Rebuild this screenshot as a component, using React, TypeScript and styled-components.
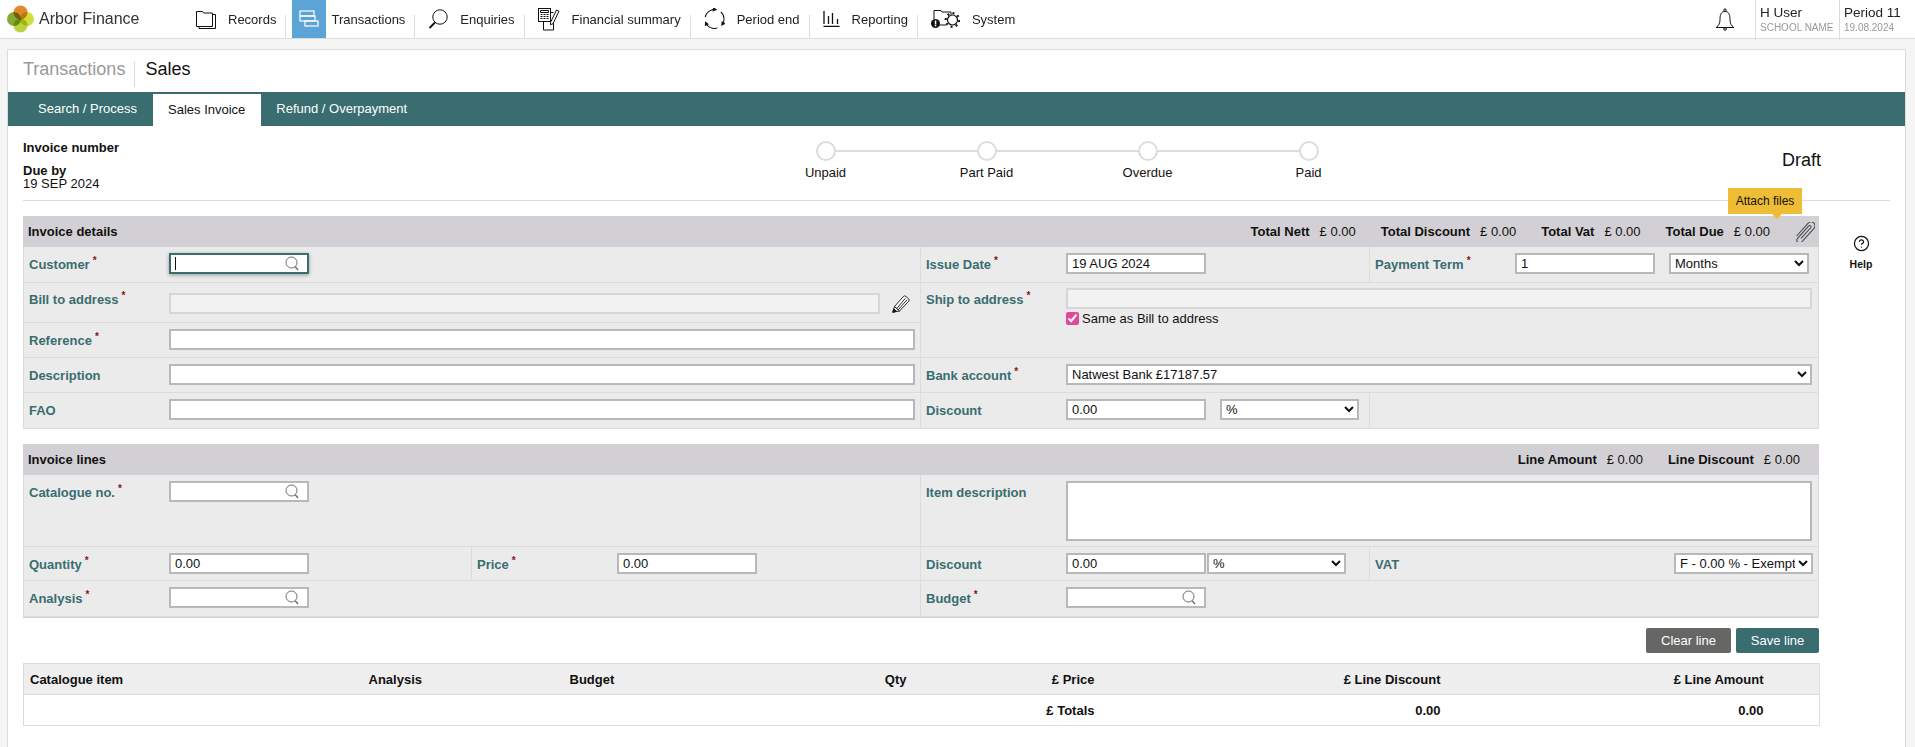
import styled, { createGlobalStyle, css } from "styled-components";
import { CircleHelp } from "lucide-react";

const GlobalStyle = createGlobalStyle`
  html, body {
    margin: 0;
    height: 100%;
    background: #f5f5f5;
    overflow: hidden;
  }
  body, input, select, textarea, button, table {
    font-family: "Liberation Sans", Arial, sans-serif;
    font-size: 13px;
    color: #111;
  }
  #root {
    height: 100%;
  }
`;

const teal = "#3a6d70";
const lineGrey = "#dcdcdc";

const Page = styled.div`
  display: flex;
  flex-direction: column;
  height: 100vh;
`;

/* top bar */

const TopBar = styled.header`
  display: flex;
  flex: none;
  align-items: stretch;
  height: 38px;
  background: #fff;
  border-bottom: 1px solid ${lineGrey};
`;

const Brand = styled.div`
  display: flex;
  flex: none;
  align-items: center;
  gap: 5px;
  width: 176px;
  padding-left: 7px;
  color: #333;
  font-size: 16px;
`;

const Nav = styled.nav`
  display: flex;
  flex: 1;
`;

const NavItem = styled.a<{ $active?: boolean }>`
  position: relative;
  display: flex;
  align-items: center;
  gap: ${(p) => (p.$active ? 5 : 12)}px;
  padding: 0 10px 0 ${(p) => (p.$active ? 6 : 13)}px;
  color: #222;
  white-space: nowrap;
  cursor: pointer;
  &:not(:last-child)::after {
    content: "";
    position: absolute;
    right: 0;
    top: 15px;
    bottom: 0;
    width: 1px;
    background: ${lineGrey};
  }
`;

const NavTile = styled.span`
  display: flex;
  align-items: center;
  justify-content: center;
  align-self: stretch;
  width: 34px;
  background: #5ba4d5;
`;

const BellBox = styled.div`
  display: flex;
  align-items: center;
  padding-right: 20px;
`;

const UserBox = styled.div<{ $w: number }>`
  position: relative;
  display: flex;
  flex-direction: column;
  width: ${(p) => p.$w}px;
  padding: 5px 0 0 4px;
  box-sizing: border-box;
  border-left: 1px solid ${lineGrey};
  margin-bottom: -2px;
  font-size: 13.5px;
  line-height: 15px;
`;

const UserName = styled.span`
  color: #222;
  font-weight: 500;
`;

const UserSub = styled.span`
  margin-top: 1px;
  color: #999;
  font-size: 10px;
  line-height: 13px;
  white-space: nowrap;
`;

/* main panel */

const Panel = styled.main`
  display: flex;
  flex: 1;
  flex-direction: column;
  margin: 10px 9px 0 7px;
  background: #fff;
  border: 1px solid ${lineGrey};
  border-bottom: 0;
`;

const TitleRow = styled.div`
  display: flex;
  align-items: flex-start;
  height: 42px;
  box-sizing: border-box;
  padding: 11px 0 0 15px;
  font-size: 18px;
`;

const Crumb = styled.span<{ $current?: boolean }>`
  line-height: 16px;
  padding-bottom: 10px;
  ${(p) =>
    p.$current
      ? css`
          padding-left: 10px;
          color: #111;
          border-left: 1px solid ${lineGrey};
        `
      : css`
          padding-right: 9px;
          color: #999;
        `}
`;

const TabBar = styled.div`
  display: flex;
  height: 34px;
  padding-left: 15px;
  background: ${teal};
`;

const Tab = styled.a<{ $active?: boolean }>`
  padding: 0 15px;
  color: #fff;
  line-height: 33px;
  cursor: pointer;
  ${(p) =>
    p.$active &&
    css`
      margin: 2px 0 0 1px;
      padding: 0 16px 0 15px;
      background: #fff;
      color: #111;
      line-height: 32px;
    `}
`;

const InvoiceHead = styled.section`
  display: flex;
  height: 75px;
  box-sizing: border-box;
  margin: 0 15px;
  border-bottom: 1px solid ${lineGrey};
`;

const HeadInfo = styled.div`
  flex: none;
  width: 722px;
  padding-top: 15px;
  line-height: 13px;
`;

const HeadStrong = styled.div`
  margin-bottom: 10px;
  font-weight: 700;
`;

const Stepper = styled.ol`
  display: grid;
  flex: none;
  grid-template-columns: repeat(4, 161px);
  margin: 0;
  padding: 15px 0 0;
  list-style: none;
`;

const Step = styled.li`
  position: relative;
  display: flex;
  flex-direction: column;
  align-items: center;
  &:not(:last-child)::after {
    content: "";
    position: absolute;
    top: 9px;
    left: 50%;
    width: 100%;
    height: 2px;
    background: ${lineGrey};
  }
`;

const StepDot = styled.span`
  position: relative;
  z-index: 1;
  width: 20px;
  height: 20px;
  box-sizing: border-box;
  background: #fff;
  border: 2px solid ${lineGrey};
  border-radius: 50%;
`;

const StepLabel = styled.span`
  margin-top: 4px;
  line-height: 16px;
`;

const Status = styled.div`
  margin-left: 393px;
  padding-top: 25px;
  font-size: 18px;
  line-height: 18px;
`;

const Workspace = styled.div`
  display: flex;
  margin: 15px 0 0 15px;
`;

const Sections = styled.div`
  flex: none;
  width: 1796px;
`;

const HelpBox = styled.a`
  display: flex;
  flex: none;
  flex-direction: column;
  align-items: center;
  width: 84px;
  padding-top: 19px;
  font-size: 10.5px;
  font-weight: 700;
  line-height: 14px;
  cursor: pointer;
  svg {
    margin-bottom: 5px;
  }
`;

const SectionHeader = styled.div<{ $right?: number; $spaced?: boolean }>`
  display: flex;
  align-items: center;
  justify-content: space-between;
  height: 31px;
  margin-top: ${(p) => (p.$spaced ? 15 : 0)}px;
  padding: 0 ${(p) => p.$right ?? 4}px 0 5px;
  background: #d2d0d4;
`;

const SectionTitle = styled.strong`
  font-weight: 700;
`;

const Totals = styled.div`
  display: flex;
  align-items: center;
  gap: 25px;
`;

const Total = styled.span`
  display: flex;
  gap: 10px;
  strong {
    font-weight: 700;
  }
`;

const AttachBox = styled.span`
  position: relative;
  display: flex;
  margin-left: 1px;
  cursor: pointer;
`;

const Tooltip = styled.span`
  position: absolute;
  right: 13px;
  bottom: calc(100% + 8px);
  z-index: 2;
  width: 74px;
  height: 26px;
  background: #efbd35;
  font-size: 12px;
  line-height: 26px;
  text-align: center;
  white-space: nowrap;
  &::after {
    content: "";
    position: absolute;
    top: 100%;
    left: 44px;
    border: 5px solid transparent;
    border-top-color: #efbd35;
    border-bottom: 0;
  }
`;

const FormGrid = styled.div<{ $cols: string; $rows: string; $closed?: boolean }>`
  display: grid;
  grid-template-columns: ${(p) => p.$cols};
  grid-template-rows: ${(p) => p.$rows};
  background: #ebebeb;
  border-left: 1px solid ${lineGrey};
  border-right: 1px solid ${lineGrey};
  ${(p) => p.$closed && "border-bottom: 1px solid #cfcfcf;"}
`;

const Cell = styled.div<{ $col?: number; $row?: number; $between?: boolean; $last?: boolean }>`
  display: flex;
  align-items: flex-start;
  min-width: 0;
  padding: 0 5px;
  border-bottom: 1px solid ${lineGrey};
  ${(p) => !p.$last && `border-right: 1px solid ${lineGrey};`}
  ${(p) => p.$col && `grid-column: span ${p.$col};`}
  ${(p) => p.$row && `grid-row: span ${p.$row};`}
  ${(p) => p.$between && "justify-content: space-between;"}
`;

const Label = styled.label<{ $auto?: boolean; $tight?: boolean }>`
  flex: none;
  width: ${(p) => (p.$auto ? "auto" : "140px")};
  padding-top: ${(p) => (p.$tight ? 6 : 7)}px;
  color: ${teal};
  font-weight: 700;
  line-height: 22px;
  white-space: nowrap;
`;

const Required = styled.sup`
  margin-left: 3px;
  color: #8a1414;
  font-size: 10px;
  line-height: 0;
`;

type ControlProps = { $w?: number; $top?: number; $off?: boolean; $left?: number };

const control = css<ControlProps>`
  flex: none;
  box-sizing: border-box;
  width: ${(p) => p.$w ?? 140}px;
  height: 21px;
  margin: ${(p) => p.$top ?? 6}px 0 0 ${(p) => p.$left ?? 0}px;
  background: ${(p) => (p.$off ? "#f2f2f2" : "#fff")};
  border: 2px solid ${(p) => (p.$off ? "#d6d6d6" : "#b8b8b8")};
  border-radius: 0;
  outline: none;
`;

const TextInput = styled.input<ControlProps>`
  ${control}
  padding: 0 4px;
`;

const Select = styled.select<ControlProps>`
  ${control}
  padding: 0;
`;

const TextArea = styled.textarea<ControlProps>`
  ${control}
  height: 60px;
  padding: 2px 4px;
  resize: none;
`;

const SearchField = styled.div<{ $focus?: boolean }>`
  position: relative;
  flex: none;
  box-sizing: border-box;
  width: 140px;
  height: 21px;
  margin-top: 6px;
  background: #fff;
  border: 2px solid ${(p) => (p.$focus ? teal : "#b8b8b8")};
  ${(p) => p.$focus && "box-shadow: 0 1px 4px rgba(0, 0, 0, 0.35);"}
  svg {
    position: absolute;
    top: 1px;
    right: 7px;
  }
`;

const Caret = styled.span`
  position: absolute;
  top: 2px;
  left: 4px;
  width: 1px;
  height: 13px;
  background: #111;
`;

const BareInput = styled.input`
  width: 110px;
  height: 17px;
  box-sizing: border-box;
  padding: 0 4px;
  background: transparent;
  border: 0;
  outline: none;
`;

const EditButton = styled.span`
  display: flex;
  margin: 12px 0 0 12px;
  cursor: pointer;
`;

const ShipStack = styled.div`
  display: flex;
  flex-direction: column;
  padding-top: 5px;
`;

const CheckRow = styled.label`
  display: flex;
  align-items: center;
  gap: 3px;
  margin-top: 3px;
  line-height: 13px;
`;

const Check = styled.input`
  width: 13px;
  height: 13px;
  margin: 0;
  accent-color: #e0489a;
`;

const Gap = styled.span`
  flex: none;
  width: 14px;
`;

const ButtonRow = styled.div`
  display: flex;
  justify-content: flex-end;
  gap: 5px;
  margin: 10px 0;
`;

const Button = styled.button<{ $tone: string; $w: number }>`
  width: ${(p) => p.$w}px;
  height: 25px;
  padding: 0;
  color: #fff;
  background: ${(p) => p.$tone};
  border: 0;
  border-radius: 2px;
  cursor: pointer;
`;

const Table = styled.table`
  width: 1796px;
  border-collapse: collapse;
  table-layout: fixed;
  border: 1px solid ${lineGrey};
`;

const Col = styled.col<{ $w: number }>`
  width: ${(p) => p.$w}px;
`;

const Th = styled.th<{ $right?: boolean }>`
  height: 30px;
  padding: 0 6px;
  background: #eee;
  border-bottom: 1px solid ${lineGrey};
  font-weight: 700;
  text-align: ${(p) => (p.$right ? "right" : "left")};
`;

const Td = styled.td`
  height: 30px;
  padding: 0 6px;
  font-weight: 700;
  text-align: right;
`;

/* drawings */

const Lobe = styled.circle`
  mix-blend-mode: multiply;
`;

const LogoMark = () => (
  <svg width="27" height="28" viewBox="0 0 27 28">
    <Lobe cx="13.5" cy="7.5" r="7" fill="#e08a2c" />
    <Lobe cx="7" cy="14" r="7" fill="#86ab34" />
    <Lobe cx="20" cy="14" r="7" fill="#d3de3e" />
    <Lobe cx="13.5" cy="20.5" r="7" fill="#bcd23e" />
  </svg>
);

const FolderIcon = () => (
  <svg width="20" height="19" viewBox="0 0 20 19" fill="none" stroke="#111">
    <path d="M.5 3V1.5h6l1 1.5h9v13.5H.5z" fill="#fff" />
    <path d="M16.5 4.5h3v14H3v-2" />
  </svg>
);

const TransactionsIcon = () => (
  <svg width="20" height="18" viewBox="0 0 20 18" fill="none" stroke="#fff" strokeWidth="1.2">
    <rect x="1" y="1" width="14" height="5" />
    <rect x="1" y="6" width="15" height="5" />
    <rect x="6" y="11" width="13" height="5" />
  </svg>
);

const EnquiriesIcon = () => (
  <svg width="20" height="20" viewBox="0 0 20 20" fill="none" stroke="#111">
    <circle cx="12" cy="8" r="7.2" />
    <path d="M7 13.5 1.5 19" strokeWidth="1.8" />
  </svg>
);

const SummaryIcon = () => (
  <svg width="22" height="24" viewBox="0 0 22 24" fill="none" stroke="#111">
    <rect x=".5" y="1.5" width="12" height="13" fill="#fff" />
    <path d="M2.5 3.5h8v2h-8zM2.5 7.5h2M5.5 7.5h2M8.5 7.5h2M2.5 9.5h2M5.5 9.5h2M8.5 9.5h2M2.5 11.5h2M5.5 11.5h2M8.5 11.5h2" />
    <path d="M5.5 14.5V23h10V13M12.500 5.500h3" />
    <path d="M12.500 15.500 18.500 3l2.500 1.200-6 12.500-2.500 1z" fill="#fff" />
  </svg>
);

const PeriodIcon = () => (
  <svg width="21" height="22" viewBox="0 0 21 22" fill="none" stroke="#111">
    <circle cx="10.5" cy="11" r="9.5" strokeDasharray="14 5.9" transform="rotate(-169 10.5 11)" />
    {[5, 125, 245].map((a) => (
      <path key={a} d="M8 -.8 12.500 1.500 8 3.800z" fill="#111" stroke="none" transform={`rotate(${a} 10.5 11)`} />
    ))}
  </svg>
);

const ReportingIcon = () => (
  <svg width="17" height="16" viewBox="0 0 17 16" fill="none" stroke="#111" strokeWidth="1.3">
    <path d="M.5 15.300h16M1 0v13M5.500 5v8M9.500 2v11M14.500 8v5" />
  </svg>
);

const SystemIcon = () => (
  <svg width="29" height="20" viewBox="0 0 29 20" fill="none" stroke="#111">
    <path d="M3 10V1.500h7l1 1.500h9v5M3 16h12" />
    <circle cx="21.5" cy="11" r="6.800" strokeWidth="2.200" strokeDasharray="2 3.300" />
    <circle cx="21.5" cy="11" r="5" fill="#fff" strokeWidth="1.200" />
    <circle cx="4.500" cy="14.500" r="4.500" fill="#111" stroke="none" />
    <rect x="3.800" y="11.500" width="1.500" height="4" fill="#fff" stroke="none" />
    <rect x="3.800" y="16" width="1.500" height="1.300" fill="#fff" stroke="none" />
  </svg>
);

const BellIcon = () => (
  <svg width="20" height="23" viewBox="0 0 20 23" fill="none" stroke="#111">
    <path d="M10 3.500C5.500 3.500 5 8 5 11.500c0 4-1.200 6-3.800 8h17.600c-2.600-2-3.800-4-3.800-8 0-3.500-.5-8-5-8z" />
    <path d="M8.800 3.500 9.200 1h1.600l.4 2.500M1 19.500h18" />
    <circle cx="10" cy="21" r="1.300" />
  </svg>
);

const ClipIcon = () => (
  <svg width="19" height="20" viewBox="-8.500 -9 17 18" fill="none" stroke="#444" strokeWidth=".9">
    <path
      transform="rotate(42)"
      d="M-3.500 8V-7.500a3.500 3.500 0 0 1 7 0V9a2.500 2.500 0 0 1-5 0V-6a1.200 1.200 0 0 1 2.400 0V7"
    />
  </svg>
);

const PencilIcon = () => (
  <svg width="18" height="18" viewBox="0 0 18 18" fill="none" stroke="#111" strokeWidth=".9">
    <path d="M2.500 11.500 11.300 1.600a1.800 1.800 0 0 1 2.500-.2l2.700 2.300a1.800 1.800 0 0 1 .2 2.500L7.500 16z" fill="#fff" />
    <path d="M5 13.300 13.300 3.300M6.200 14.800 15 4.800" />
    <path d="M.8 17.300 2.500 11.500 7.500 16z" fill="#fff" />
    <path d="M.8 17.300 1.800 13.800 4.500 16.200z" fill="#111" />
  </svg>
);

const SearchGlass = () => (
  <svg width="16" height="15" viewBox="0 0 16 15" fill="none" stroke="#6a6a6a">
    <circle cx="7.5" cy="6.500" r="5.500" />
    <path d="M11.200 10.800 14 14" strokeWidth="1.4" />
  </svg>
);

/* data */

const navItems = [
  { label: "Records", icon: <FolderIcon /> },
  { label: "Transactions", icon: <TransactionsIcon />, active: true },
  { label: "Enquiries", icon: <EnquiriesIcon /> },
  { label: "Financial summary", icon: <SummaryIcon /> },
  { label: "Period end", icon: <PeriodIcon /> },
  { label: "Reporting", icon: <ReportingIcon /> },
  { label: "System", icon: <SystemIcon /> },
];

const steps = ["Unpaid", "Part Paid", "Overdue", "Paid"];

const detailTotals = ["Total Nett", "Total Discount", "Total Vat", "Total Due"];

const lineTotals = ["Line Amount", "Line Discount"];

const columnWidths = [339, 201, 237, 112, 188, 346, 323, 50];

const FieldLabel = ({ text, required, tight }: { text: string; required?: boolean; tight?: boolean }) => (
  <Label $tight={tight}>
    {text}
    {required && <Required>*</Required>}
  </Label>
);

const TotalList = ({ names }: { names: string[] }) => (
  <>
    {names.map((name) => (
      <Total key={name}>
        <strong>{name}</strong>
        <span>£ 0.00</span>
      </Total>
    ))}
  </>
);

export default function App() {
  return (
    <Page>
      <GlobalStyle />
      <TopBar>
        <Brand>
          <LogoMark />
          Arbor Finance
        </Brand>
        <Nav>
          {navItems.map((item) => (
            <NavItem key={item.label} $active={item.active}>
              {item.active ? <NavTile>{item.icon}</NavTile> : item.icon}
              {item.label}
            </NavItem>
          ))}
        </Nav>
        <BellBox>
          <BellIcon />
        </BellBox>
        <UserBox $w={84}>
          <UserName>H User</UserName>
          <UserSub>SCHOOL NAME</UserSub>
        </UserBox>
        <UserBox $w={76}>
          <UserName>Period 11</UserName>
          <UserSub>19.08.2024</UserSub>
        </UserBox>
      </TopBar>

      <Panel>
        <TitleRow>
          <Crumb>Transactions</Crumb>
          <Crumb $current>Sales</Crumb>
        </TitleRow>
        <TabBar>
          <Tab>Search / Process</Tab>
          <Tab $active>Sales Invoice</Tab>
          <Tab>Refund / Overpayment</Tab>
        </TabBar>

        <InvoiceHead>
          <HeadInfo>
            <HeadStrong>Invoice number</HeadStrong>
            <strong>Due by</strong>
            <div>19 SEP 2024</div>
          </HeadInfo>
          <Stepper>
            {steps.map((step) => (
              <Step key={step}>
                <StepDot />
                <StepLabel>{step}</StepLabel>
              </Step>
            ))}
          </Stepper>
          <Status>Draft</Status>
        </InvoiceHead>

        <Workspace>
          <Sections>
            <SectionHeader>
              <SectionTitle>Invoice details</SectionTitle>
              <Totals>
                <TotalList names={detailTotals} />
                <AttachBox>
                  <ClipIcon />
                  <Tooltip>Attach files</Tooltip>
                </AttachBox>
              </Totals>
            </SectionHeader>
            <FormGrid $cols="897px 449px 448px" $rows="36px 40px 35px 35px 36px">
              <Cell>
                <FieldLabel text="Customer" required />
                <SearchField $focus>
                  <BareInput />
                  <Caret />
                  <SearchGlass />
                </SearchField>
              </Cell>
              <Cell>
                <FieldLabel text="Issue Date" required />
                <TextInput defaultValue="19 AUG 2024" />
              </Cell>
              <Cell $last>
                <FieldLabel text="Payment Term" required />
                <TextInput defaultValue="1" />
                <Gap />
                <Select defaultValue="Months">
                  <option>Months</option>
                  <option>Days</option>
                </Select>
              </Cell>

              <Cell>
                <FieldLabel text="Bill to address" required tight />
                <TextInput $w={711} $top={10} $off disabled />
                <EditButton>
                  <PencilIcon />
                </EditButton>
              </Cell>
              <Cell $col={2} $row={2} $last>
                <FieldLabel text="Ship to address" required tight />
                <ShipStack>
                  <TextInput $w={746} $top={0} $off disabled />
                  <CheckRow>
                    <Check type="checkbox" defaultChecked />
                    Same as Bill to address
                  </CheckRow>
                </ShipStack>
              </Cell>
              <Cell>
                <FieldLabel text="Reference" required />
                <TextInput $w={746} />
              </Cell>

              <Cell>
                <FieldLabel text="Description" />
                <TextInput $w={746} />
              </Cell>
              <Cell $col={2} $last>
                <FieldLabel text="Bank account" required />
                <Select $w={746} defaultValue="Natwest Bank £17187.57">
                  <option>Natwest Bank £17187.57</option>
                </Select>
              </Cell>

              <Cell>
                <FieldLabel text="FAO" />
                <TextInput $w={746} />
              </Cell>
              <Cell>
                <FieldLabel text="Discount" />
                <TextInput defaultValue="0.00" />
                <Gap />
                <Select $w={139} defaultValue="%">
                  <option>%</option>
                  <option>£</option>
                </Select>
              </Cell>
              <Cell $last />
            </FormGrid>

            <SectionHeader $right={19} $spaced>
              <SectionTitle>Invoice lines</SectionTitle>
              <Totals>
                <TotalList names={lineTotals} />
              </Totals>
            </SectionHeader>
            <FormGrid $cols="448px 449px 449px 448px" $rows="72px 34px 36px" $closed>
              <Cell $col={2}>
                <FieldLabel text="Catalogue no." required />
                <SearchField>
                  <BareInput />
                  <SearchGlass />
                </SearchField>
              </Cell>
              <Cell $col={2} $last>
                <FieldLabel text="Item description" />
                <TextArea $w={746} />
              </Cell>

              <Cell>
                <FieldLabel text="Quantity" required />
                <TextInput defaultValue="0.00" />
              </Cell>
              <Cell>
                <FieldLabel text="Price" required />
                <TextInput defaultValue="0.00" />
              </Cell>
              <Cell>
                <FieldLabel text="Discount" />
                <TextInput defaultValue="0.00" />
                <Select $w={139} $left={1} defaultValue="%">
                  <option>%</option>
                  <option>£</option>
                </Select>
              </Cell>
              <Cell $between $last>
                <Label $auto>VAT</Label>
                <Select $w={139} defaultValue="F">
                  <option value="F">F - 0.00 % - Exempt</option>
                </Select>
              </Cell>

              <Cell $col={2}>
                <FieldLabel text="Analysis" required />
                <SearchField>
                  <BareInput />
                  <SearchGlass />
                </SearchField>
              </Cell>
              <Cell $col={2} $last>
                <FieldLabel text="Budget" required />
                <SearchField>
                  <BareInput />
                  <SearchGlass />
                </SearchField>
              </Cell>
            </FormGrid>

            <ButtonRow>
              <Button $tone="#666664" $w={85}>
                Clear line
              </Button>
              <Button $tone={teal} $w={83}>
                Save line
              </Button>
            </ButtonRow>

            <Table>
              <colgroup>
                {columnWidths.map((w, i) => (
                  <Col key={i} $w={w} />
                ))}
              </colgroup>
              <thead>
                <tr>
                  <Th>Catalogue item</Th>
                  <Th>Analysis</Th>
                  <Th>Budget</Th>
                  <Th $right>Qty</Th>
                  <Th $right>£ Price</Th>
                  <Th $right>£ Line Discount</Th>
                  <Th $right>£ Line Amount</Th>
                  <Th />
                </tr>
              </thead>
              <tbody>
                <tr>
                  <Td colSpan={4} />
                  <Td>£ Totals</Td>
                  <Td>0.00</Td>
                  <Td>0.00</Td>
                  <Td />
                </tr>
              </tbody>
            </Table>
          </Sections>
          <HelpBox>
            <CircleHelp size={17} strokeWidth={1.8} color="#111" />
            Help
          </HelpBox>
        </Workspace>
      </Panel>
    </Page>
  );
}
